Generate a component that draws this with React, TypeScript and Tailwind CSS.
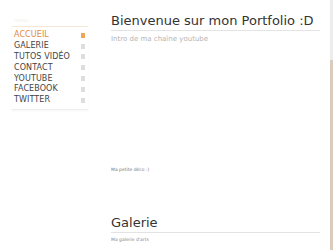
import React from "react";

const items = ["ACCUEIL", "GALERIE", "TUTOS VIDÉO", "CONTACT", "YOUTUBE", "FACEBOOK", "TWITTER"];

export default function App() {
  return (
    <div className="relative w-[333px] h-[250px] overflow-hidden bg-white" style={{ fontFamily: '"DejaVu Sans", sans-serif' }}>
      <div className="flex">
        <div className="w-[111px] shrink-0 pl-[12px] pr-[23px] pt-[16px]">
          <div className="text-[5px] leading-[8px] text-[#f3eee8] pl-[2px]">menu</div>
          <div className="mt-[2px] border-t border-[#f6e7d6] border-b border-b-[#eeeeee] pt-[3px] pb-[3px] shadow-[0_1px_2px_rgba(0,0,0,0.04)]">
            {items.map((t, i) => (
              <div key={t} className="flex items-center justify-between h-[10.8px] pl-[2px] pr-[3px]">
                <span className={`text-[8px] leading-[10px] tracking-[0.1px] ${i === 0 ? "text-[#e08a3c]" : "text-[#444444]"}`}>{t}</span>
                <span className={`w-[4px] h-[5px] ${i === 0 ? "bg-[#eda653]" : "bg-[#dddddd]"}`} />
              </div>
            ))}
          </div>
        </div>
        <div className="w-[209px] shrink-0 pt-[13px]">
          <div className="text-[13px] leading-[16px] text-[#333333] pb-[1px] border-b border-[#e3e3e3] whitespace-nowrap">Bienvenue sur mon Portfolio :D</div>
          <div className="text-[7px] leading-[10px] mt-[3px] text-[#b5b5b5] whitespace-nowrap">Intro de ma chaîne youtube</div>
          <div className="h-[123px]" />
          <div className="text-[4.5px] leading-[6px] text-[#777777] whitespace-nowrap">Ma petite déco :)</div>
          <div className="h-[42px]" />
          <div className="text-[13px] leading-[16px] text-[#333333] pb-[1px] border-b border-[#e3e3e3]">Galerie</div>
          <div className="text-[4.5px] leading-[6px] mt-[4px] text-[#888888] whitespace-nowrap">Ma galerie d'arts</div>
        </div>
      </div>
      <div className="absolute right-0 top-0 w-[3px] h-[250px] flex flex-col">
        <div className="h-[60px] bg-[#ececec]" />
        <div className="flex-1 bg-[#d9cbbd]" />
      </div>
    </div>
  );
}
